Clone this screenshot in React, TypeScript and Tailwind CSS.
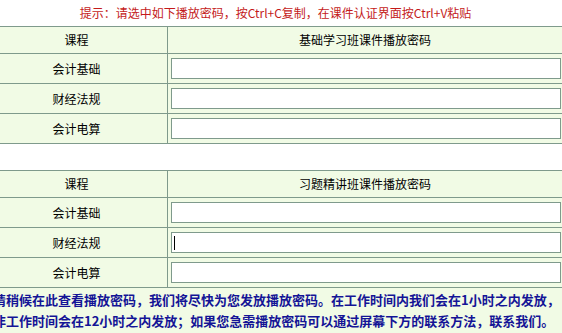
const rows1 = ["会计基础", "财经法规", "会计电算"];

function Box({ caret }: { caret?: boolean }) {
  return (
    <div className="h-[21px] w-[390px] border border-[#7f9a8c] bg-white flex items-center pl-[2px]">
      {caret && <span className="block w-px h-[14px] bg-black" />}
    </div>
  );
}

function PwdTable({ title, caretRow }: { title: string; caretRow?: number }) {
  return (
    <div className="border-t border-[#7f9a8c] bg-[#f1fbe5]">
      <div className="grid grid-cols-[168px_1fr] h-[27px] border-b border-[#7f9a8c]">
        <div className="border-r border-[#7f9a8c] flex items-center justify-center pr-[14px]">课程</div>
        <div className="flex items-center justify-center">{title}</div>
      </div>
      {rows1.map((r, i) => (
        <div key={r} className="grid grid-cols-[168px_1fr] h-[30px] border-b border-[#7f9a8c]">
          <div className="border-r border-[#7f9a8c] flex items-center justify-center pr-[14px]">{r}</div>
          <div className="flex items-center pl-[3px]">
            <Box caret={caretRow === i} />
          </div>
        </div>
      ))}
    </div>
  );
}

export default function App() {
  return (
    <div
      className="w-[562px] h-[333px] overflow-hidden bg-white text-[12px] text-black"
      style={{ fontFamily: '"Noto Sans CJK SC", sans-serif' }}
    >
      <div className="h-[26px] flex items-center justify-center pr-[11px] text-[#c41a1a]">
        提示：请选中如下播放密码，按Ctrl+C复制，在课件认证界面按Ctrl+V粘贴
      </div>
      <PwdTable title="基础学习班课件播放密码" />
      <div className="h-[26px]" />
      <PwdTable title="习题精讲班课件播放密码" caretRow={1} />
      <div className="bg-[#f1fbe5] h-[60px] pt-[1px] text-[13px] font-bold text-[#141496] leading-[21px] whitespace-nowrap -ml-[7px]">
        <div>请稍候在此查看播放密码，我们将尽快为您发放播放密码。在工作时间内我们会在1小时之内发放，</div>
        <div>非工作时间会在12小时之内发放；如果您急需播放密码可以通过屏幕下方的联系方法，联系我们。</div>
      </div>
    </div>
  );
}
